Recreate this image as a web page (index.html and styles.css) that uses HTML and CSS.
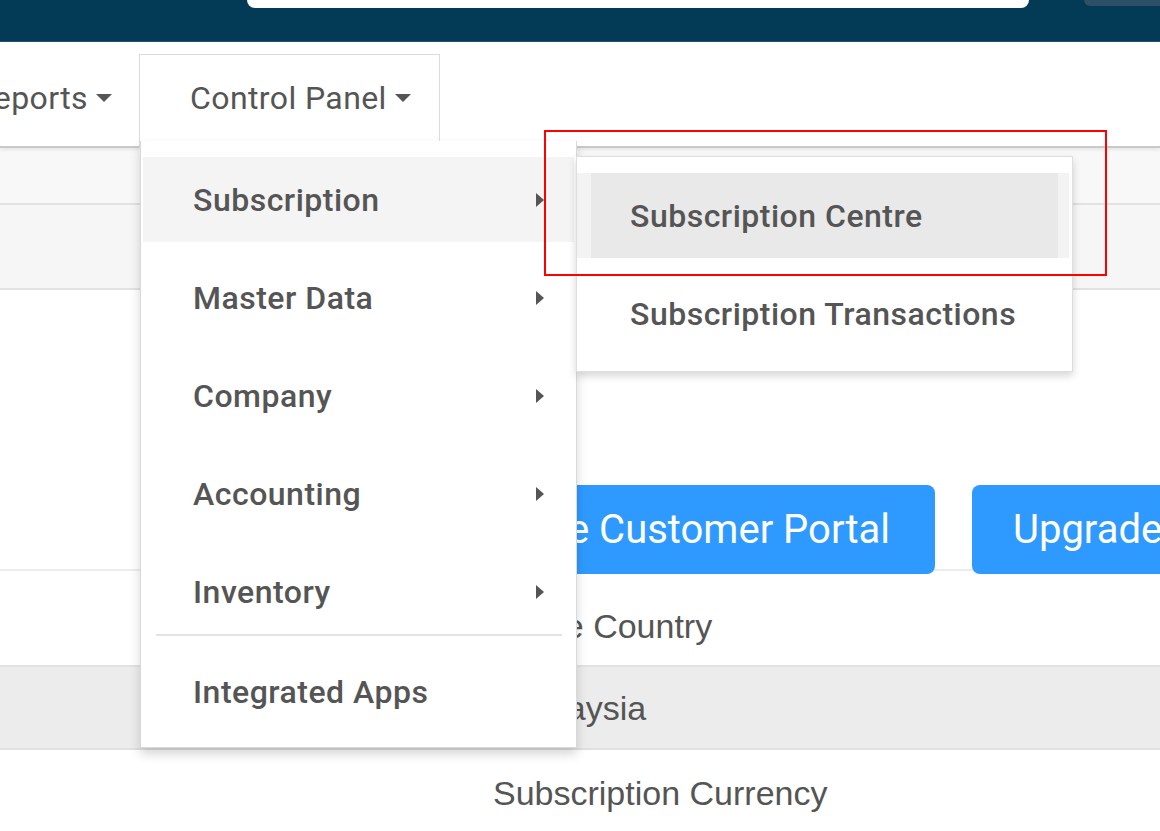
FILE: index.html
```html
<!DOCTYPE html>
<html lang="en">
<head>
<meta charset="utf-8">
<title>Control Panel</title>
<link rel="stylesheet" href="styles.css">
</head>
<body>
<div class="page">
  <header class="topbar">
    <div class="search"></div>
    <div class="top-btn"></div>
  </header>

  <nav class="navbar">
    <div class="nav-item reports">Reports<span class="caret"></span></div>
    <div class="nav-item tab">Control Panel<span class="caret"></span></div>
  </nav>

  <div class="row row-tool"></div>
  <div class="row row-sub"></div>

  <section class="actions">
    <div class="btn-row">
      <div class="btn btn-portal">Go to the Customer Portal</div>
      <div class="btn btn-upgrade">Upgrade Plan</div>
    </div>
  </section>

  <div class="row row-label"><span class="cell">Home Country</span></div>
  <div class="row row-value"><span class="cell value">Malaysia</span></div>
  <div class="row row-label2"><span class="cell">Subscription Currency</span></div>

  <ul class="dropdown">
    <li class="item active">Subscription<span class="arrow"></span></li>
    <li class="item">Master Data<span class="arrow"></span></li>
    <li class="item">Company<span class="arrow"></span></li>
    <li class="item">Accounting<span class="arrow"></span></li>
    <li class="item last">Inventory<span class="arrow"></span></li>
    <li class="divider"></li>
    <li class="item">Integrated Apps</li>
  </ul>

  <ul class="submenu">
    <li class="sub-item hover"><span class="sub-link">Subscription Centre</span></li>
    <li class="sub-item"><span class="sub-link">Subscription Transactions</span></li>
  </ul>

  <div class="highlight-box"></div>
</div>
</body>
</html>
```

FILE: styles.css
```css
* { box-sizing: border-box; }
html, body {
  margin: 0;
  padding: 0;
  width: 1160px;
  height: 831px;
  overflow: hidden;
  background: #fff;
  font-family: Roboto, "Liberation Sans", sans-serif;
  color: #555;
}
.page {
  position: relative;
  width: 1160px;
  height: 831px;
  overflow: hidden;
}

/* top bar */
.topbar {
  height: 42px;
  background: #033a55;
  border-bottom: 1px solid #1f5471;
  display: flex;
  align-items: flex-start;
}
.search {
  margin-left: 247px;
  width: 782px;
  height: 8px;
  background: #fff;
  border-radius: 0 0 8px 8px;
}
.top-btn {
  margin-left: 55px;
  flex: 1;
  height: 6px;
  background: #2d5068;
  border-radius: 0 0 0 6px;
}

/* nav */
.navbar {
  height: 106px;
  display: flex;
  align-items: flex-end;
  border-bottom: 2px solid #c9c9c9;
  box-shadow: 0 2px 3px rgba(0,0,0,0.08);
  position: relative;
  z-index: 1;
}
.nav-item {
  font-size: 32px;
  letter-spacing: 0.4px;
  display: flex;
  align-items: center;
  height: 94px;
  padding-bottom: 7px;
  margin-bottom: -2px;
  color: #555;
  white-space: nowrap;
}
.reports {
  margin-left: -88px;
  width: 200px;
  margin-right: 27px;
  justify-content: flex-end;
}
.tab {
  width: 301px;
  padding-left: 50px;
  background: #fff;
  border: 1px solid #dcdcdc;
  border-bottom: none;
  position: relative;
  z-index: 2;
}
.caret {
  display: inline-block;
  width: 0;
  height: 0;
  margin-left: 8px;
  border-left: 8px solid transparent;
  border-right: 8px solid transparent;
  border-top: 8px solid #555;
}

/* rows */
.row { width: 100%; }
.row-tool {
  height: 57px;
  background: #f8f8f8;
  border-bottom: 2px solid #e2e2e2;
}
.row-sub {
  height: 85px;
  background: #f6f6f6;
  border-bottom: 2px solid #e2e2e2;
}
.actions {
  height: 281px;
  border-bottom: 2px solid #ececec;
  display: flex;
  align-items: flex-end;
}
.btn-row {
  display: flex;
  gap: 37px;
  margin-left: 400px;
  margin-bottom: -5px;
  position: relative;
}
.btn {
  height: 89px;
  background: #2e9aff;
  color: #fff;
  border-radius: 8px;
  font-size: 40px;
  display: flex;
  align-items: center;
  white-space: nowrap;
}
.btn-portal {
  width: 535px;
  justify-content: flex-end;
  padding-right: 45px;
}
.btn-upgrade {
  padding-left: 41px;
  padding-right: 41px;
}
.cell {
  font-family: "Liberation Sans", Arial, sans-serif;
  font-size: 34px;
  color: #555;
  padding-left: 493px;
  white-space: nowrap;
}
.cell.value { padding-left: 512px; }
.row-label {
  height: 96px;
  padding-top: 36px;
  border-bottom: 2px solid #e2e2e2;
}
.row-value {
  height: 83px;
  padding-top: 22px;
  background: #ececec;
  border-bottom: 2px solid #e0e0e0;
}
.row-label2 {
  height: 83px;
  padding-top: 24px;
}

/* dropdown */
.dropdown {
  position: absolute;
  left: 140px;
  top: 141px;
  width: 437px;
  margin: 0;
  padding: 16px 2px 13px;
  list-style: none;
  background: #fff;
  border: 1px solid #d9d9d9;
  border-top: none;
  box-shadow: 0 6px 10px rgba(0,0,0,0.16);
  z-index: 5;
}
.item {
  height: 85px;
  margin-bottom: 13px;
  padding-left: 50px;
  padding-right: 30px;
  display: flex;
  align-items: center;
  justify-content: space-between;
  font-size: 32px;
  letter-spacing: 0.5px;
  font-weight: 500;
  color: #555;
  white-space: nowrap;
}
.item.last { margin-bottom: 0; }
.item.active { background: #f4f4f4; }
.arrow {
  width: 0;
  height: 0;
  border-top: 7px solid transparent;
  border-bottom: 7px solid transparent;
  border-left: 8px solid #555;
}
.divider {
  height: 2px;
  background: #e2e2e2;
  margin: 0 12px 13px 13px;
}
.dropdown .item:last-child { margin-bottom: 0; }

/* submenu */
.submenu {
  position: absolute;
  left: 576px;
  top: 156px;
  width: 497px;
  margin: 0;
  padding: 16px 3px 15px 0;
  list-style: none;
  background: #fff;
  border: 1px solid #dedede;
  box-shadow: 0 4px 8px rgba(0,0,0,0.16);
  z-index: 6;
}
.sub-item {
  height: 85px;
  margin-bottom: 13px;
  padding: 0 11px 0 14px;
  display: flex;
}
.sub-item:last-child { margin-bottom: 0; }
.sub-item.hover { background: #f3f3f3; }
.sub-link {
  flex: 1;
  display: flex;
  align-items: center;
  padding-left: 39px;
  font-size: 32px;
  letter-spacing: 0.5px;
  font-weight: 500;
  color: #555;
  white-space: nowrap;
}
.sub-item.hover .sub-link { background: #e9e9e9; }

/* annotation */
.highlight-box {
  position: absolute;
  left: 544px;
  top: 130px;
  width: 563px;
  height: 146px;
  border: 2px solid #f00;
  z-index: 7;
}
```
